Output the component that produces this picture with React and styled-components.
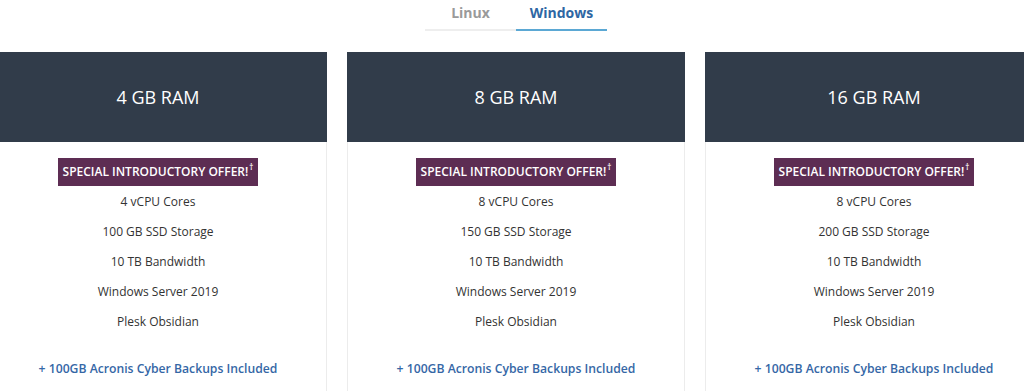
import React, { useState } from "react";
import styled, { createGlobalStyle } from "styled-components";

const GlobalStyle = createGlobalStyle`
  html, body {
    margin: 0;
    padding: 0;
    background: #fff;
    overflow: hidden;
  }
  body {
    font-family: "Open Sans", "Liberation Sans", sans-serif;
  }
`;

const plans = [
  { ram: "4 GB RAM", cores: "4 vCPU Cores", storage: "100 GB SSD Storage" },
  { ram: "8 GB RAM", cores: "8 vCPU Cores", storage: "150 GB SSD Storage" },
  { ram: "16 GB RAM", cores: "8 vCPU Cores", storage: "200 GB SSD Storage" },
];

const Page = styled.div`
  width: 1054px;
  margin-left: -11px;
`;

const Tabs = styled.div`
  display: flex;
  justify-content: center;
  height: 31px;
  margin-bottom: 21px;
`;

const Tab = styled.button`
  width: 91px;
  padding: 0 0 4px;
  border: none;
  background: transparent;
  border-bottom: 2px solid ${({ active }) => (active ? "#5ba8d4" : "#eeeeee")};
  color: ${({ active }) => (active ? "#2e66a3" : "#9a9a9a")};
  font-family: inherit;
  font-size: 14px;
  font-weight: 700;
  cursor: pointer;
`;

const Cards = styled.div`
  display: grid;
  grid-template-columns: repeat(3, 338px);
  gap: 20px;
`;

const Card = styled.div`
  display: flex;
  flex-direction: column;
`;

const Header = styled.div`
  height: 90px;
  background: #313c4a;
  color: #fff;
  display: flex;
  align-items: center;
  justify-content: center;
  font-size: 18px;
  font-weight: 500;
`;

const Body = styled.div`
  border: 1px solid #ececec;
  border-top: none;
  display: flex;
  flex-direction: column;
  align-items: center;
  padding-top: 16px;
  height: 300px;
`;

const Badge = styled.div`
  background: #5d2d53;
  color: #fff;
  font-size: 12px;
  font-weight: 600;
  text-transform: uppercase;
  padding: 0 5px;
  height: 28px;
  line-height: 28px;
  margin-bottom: 1px;

  sup {
    font-size: 8px;
    line-height: 0;
    vertical-align: 6px;
    margin-left: 1px;
  }
`;

const Feature = styled.div`
  font-size: 12px;
  color: #333;
  line-height: 30px;
`;

const Backup = styled.a`
  margin-top: 17px;
  font-size: 12.2px;
  font-weight: 600;
  color: #3567a6;
  text-decoration: none;
  line-height: 30px;
`;

const App = () => {
  const [os, setOs] = useState("windows");

  return (
    <Page>
      <GlobalStyle />
      <Tabs>
        <Tab active={os === "linux"} onClick={() => setOs("linux")}>
          Linux
        </Tab>
        <Tab active={os === "windows"} onClick={() => setOs("windows")}>
          Windows
        </Tab>
      </Tabs>
      <Cards>
        {plans.map((p) => (
          <Card key={p.ram}>
            <Header>{p.ram}</Header>
            <Body>
              <Badge>
                Special Introductory Offer!<sup>†</sup>
              </Badge>
              <Feature>{p.cores}</Feature>
              <Feature>{p.storage}</Feature>
              <Feature>10 TB Bandwidth</Feature>
              <Feature>Windows Server 2019</Feature>
              <Feature>Plesk Obsidian</Feature>
              <Backup href="#">+ 100GB Acronis Cyber Backups Included</Backup>
            </Body>
          </Card>
        ))}
      </Cards>
    </Page>
  );
};

export default App;
